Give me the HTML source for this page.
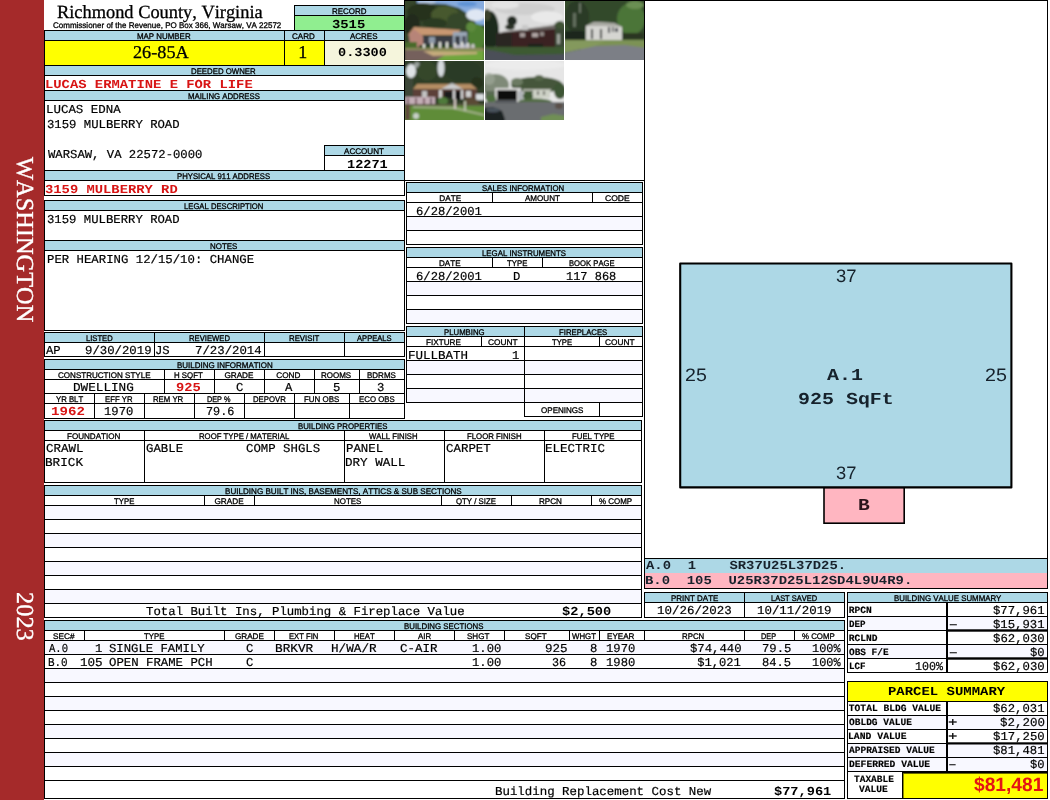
<!DOCTYPE html>
<html lang="en"><head><meta charset="utf-8"><title>Richmond County, Virginia - Property Record Card</title>
<style>
html,body{margin:0;padding:0;background:#fff;}
body{width:1050px;height:800px;overflow:hidden;position:relative;}
#page{position:absolute;left:0;top:0;width:1050px;height:800px;overflow:hidden;background:#fff;}
#gfx,#txt{position:absolute;left:0;top:0;width:1050px;height:800px;}
#txt{will-change:transform;}
.b,.l,.t,.fr{position:absolute;}
.l{background:#000;}
.fr{border:1px solid #000;}
.t{white-space:pre;color:#000;transform-origin:0 0;font-kerning:none;text-rendering:geometricPrecision;font-variant-ligatures:none;}
.lab{-webkit-text-stroke:0.3px;font-family:"Liberation Sans",sans-serif;font-size:8.2px;line-height:10px;}
.c{-webkit-text-stroke:0.2px;font-family:"Liberation Mono",monospace;font-size:12.1px;line-height:14px;}
.cb{font-family:"Liberation Mono",monospace;font-size:12.2px;font-weight:bold;line-height:15px;}
.cs{-webkit-text-stroke:0.15px;font-family:"Liberation Mono",monospace;font-size:9.6px;line-height:11px;font-weight:bold;}
.ser{-webkit-text-stroke:0.3px;font-family:"Liberation Serif",serif;font-size:18.6px;line-height:22px;}
.sans{font-family:"Liberation Sans",sans-serif;font-size:18px;line-height:22px;}
.sansb{font-family:"Liberation Sans",sans-serif;font-size:19.4px;line-height:24px;font-weight:bold;}
.red{color:#d81414;}
.side{font-family:"Liberation Serif",serif;color:#fff;font-size:24.4px;line-height:24px;-webkit-text-stroke:0.35px #fff;transform-origin:0 0;transform:rotate(90deg) translateY(-50%);}

</style></head>
<body>
<div id="page">
<div id="gfx">
<div class="b" style="left:0px;top:0px;width:44px;height:800px;background:#a52a2a;"></div>
<div class="b" style="left:295px;top:6px;width:109px;height:9px;background:#add8e6;"></div>
<div class="b" style="left:295px;top:16px;width:109px;height:14px;background:#90ee90;"></div>
<div class="fr" style="left:294px;top:5px;width:109px;height:24px"></div>
<div class="l" style="left:294px;top:15px;width:111px;height:1px"></div>
<div class="b" style="left:45px;top:31px;width:359px;height:9px;background:#add8e6;"></div>
<div class="b" style="left:45px;top:41px;width:239px;height:24px;background:#ffff00;"></div>
<div class="b" style="left:285px;top:41px;width:39px;height:24px;background:#ffff00;"></div>
<div class="b" style="left:325px;top:41px;width:79px;height:24px;background:#f5f5dc;"></div>
<div class="b" style="left:45px;top:66px;width:359px;height:9px;background:#add8e6;"></div>
<div class="b" style="left:45px;top:91px;width:359px;height:9px;background:#add8e6;"></div>
<div class="b" style="left:45px;top:171px;width:359px;height:9px;background:#add8e6;"></div>
<div class="fr" style="left:44px;top:30px;width:359px;height:164px"></div>
<div class="l" style="left:44px;top:40px;width:361px;height:1px"></div>
<div class="l" style="left:44px;top:65px;width:361px;height:1px"></div>
<div class="l" style="left:44px;top:75px;width:361px;height:1px"></div>
<div class="l" style="left:44px;top:90px;width:361px;height:1px"></div>
<div class="l" style="left:44px;top:100px;width:361px;height:1px"></div>
<div class="l" style="left:44px;top:170px;width:361px;height:1px"></div>
<div class="l" style="left:44px;top:180px;width:361px;height:1px"></div>
<div class="l" style="left:284px;top:30px;width:1px;height:36px"></div>
<div class="l" style="left:324px;top:30px;width:1px;height:36px"></div>
<div class="b" style="left:325px;top:146px;width:79px;height:9px;background:#add8e6;"></div>
<div class="fr" style="left:324px;top:145px;width:79px;height:24px"></div>
<div class="l" style="left:324px;top:155px;width:81px;height:1px"></div>
<div class="b" style="left:45px;top:201px;width:359px;height:9px;background:#add8e6;"></div>
<div class="b" style="left:45px;top:241px;width:359px;height:9px;background:#add8e6;"></div>
<div class="fr" style="left:44px;top:200px;width:359px;height:129px"></div>
<div class="l" style="left:44px;top:210px;width:361px;height:1px"></div>
<div class="l" style="left:44px;top:240px;width:361px;height:1px"></div>
<div class="l" style="left:44px;top:250px;width:361px;height:1px"></div>
<div class="b" style="left:45px;top:333px;width:359px;height:9px;background:#add8e6;"></div>
<div class="fr" style="left:44px;top:332px;width:359px;height:23px"></div>
<div class="l" style="left:44px;top:342px;width:361px;height:1px"></div>
<div class="l" style="left:154px;top:332px;width:1px;height:25px"></div>
<div class="l" style="left:264px;top:332px;width:1px;height:25px"></div>
<div class="l" style="left:344px;top:332px;width:1px;height:25px"></div>
<div class="b" style="left:45px;top:360px;width:359px;height:9px;background:#add8e6;"></div>
<div class="fr" style="left:44px;top:359px;width:359px;height:58px"></div>
<div class="l" style="left:44px;top:369px;width:361px;height:1px"></div>
<div class="l" style="left:44px;top:379px;width:361px;height:1px"></div>
<div class="l" style="left:44px;top:393px;width:361px;height:1px"></div>
<div class="l" style="left:44px;top:403px;width:361px;height:1px"></div>
<div class="l" style="left:164px;top:369px;width:1px;height:25px"></div>
<div class="l" style="left:214px;top:369px;width:1px;height:25px"></div>
<div class="l" style="left:264px;top:369px;width:1px;height:25px"></div>
<div class="l" style="left:314px;top:369px;width:1px;height:25px"></div>
<div class="l" style="left:359px;top:369px;width:1px;height:25px"></div>
<div class="l" style="left:94px;top:393px;width:1px;height:26px"></div>
<div class="l" style="left:144px;top:393px;width:1px;height:26px"></div>
<div class="l" style="left:194px;top:393px;width:1px;height:26px"></div>
<div class="l" style="left:244px;top:393px;width:1px;height:26px"></div>
<div class="l" style="left:294px;top:393px;width:1px;height:26px"></div>
<div class="l" style="left:349px;top:393px;width:1px;height:26px"></div>
<div class="l" style="left:404px;top:0px;width:1px;height:31px"></div>
<div class="l" style="left:404px;top:0px;width:644px;height:1px"></div>
<div class="l" style="left:404px;top:180px;width:241px;height:1px"></div>
<div class="l" style="left:644px;top:0px;width:1px;height:589px"></div>
<div class="l" style="left:1047px;top:0px;width:1px;height:589px"></div>
<svg class="b" style="left:405px;top:1px" width="79" height="59" viewBox="0 0 79 59"><defs><filter id="f1" x="-10%" y="-10%" width="120%" height="120%"><feGaussianBlur stdDeviation="0.9"/></filter><clipPath id="c1"><rect width="79" height="59"/></clipPath></defs><rect width="79" height="59" fill="#888"/><g clip-path="url(#c1)"><g filter="url(#f1)"><rect x="-2" y="-2" width="83" height="63" fill="#35452a"/><polygon points="12,-2 81,-2 81,24 72,24 66,15 54,7 40,3 12,2" fill="#86abdf"/><ellipse cx="71" cy="14" rx="10" ry="6" fill="#dfe7f3"/><ellipse cx="62" cy="3" rx="10" ry="2.5" fill="#5f93d6"/><ellipse cx="22" cy="1" rx="9" ry="1.8" fill="#c9d6e8" opacity="0.8"/><ellipse cx="18" cy="11" rx="16" ry="9" fill="#27331f"/><ellipse cx="40" cy="14" rx="14" ry="9" fill="#46592d"/><ellipse cx="7" cy="24" rx="8" ry="11" fill="#222b1b"/><ellipse cx="52" cy="20" rx="10" ry="8" fill="#34462a"/><ellipse cx="30" cy="22" rx="12" ry="5" fill="#2b3a22"/><ellipse cx="72" cy="36" rx="9" ry="13" fill="#4f8033"/><ellipse cx="66" cy="26" rx="5" ry="5" fill="#5d8a3c"/><polygon points="3,34 9,26 56,29 50,34" fill="#c99772"/><polygon points="4,34 9,28 18,35 18,47 5,45" fill="#b78478"/><rect x="18" y="35" width="30" height="9" fill="#3b3d45"/><rect x="24" y="36" width="6" height="6" fill="#8d99a8"/><rect x="48" y="31" width="14" height="17" fill="#9aa6b5"/><rect x="50" y="35" width="5" height="9" fill="#3a4048"/><rect x="57" y="35" width="4" height="8" fill="#48505a"/><rect x="0" y="41" width="12" height="7" fill="#4a6a2c"/><rect x="14" y="44" width="36" height="5" fill="#2f4a26"/><rect x="18" y="43" width="2" height="8" fill="#e8e8e0"/><rect x="26" y="42" width="2" height="8" fill="#e8e8e0"/><rect x="34" y="41" width="2" height="9" fill="#e8e8e0"/><rect x="41" y="41" width="2" height="9" fill="#e8e8e0"/><rect x="49" y="42" width="2" height="8" fill="#e8e8e0"/><rect x="56" y="41" width="2" height="8" fill="#e8e8e0"/><rect x="62" y="42" width="2" height="8" fill="#e8e8e0"/><rect x="67" y="43" width="2" height="7" fill="#d8d8d0"/><rect x="48" y="44" width="22" height="5" fill="#c9c0cc" opacity="0.6"/><rect x="0" y="47" width="79" height="3" fill="#8a8a5a"/><polygon points="0,50 79,50 79,60 0,60" fill="#6fa63c"/><polygon points="0,49 22,49 40,54 30,60 0,60" fill="#75605c"/><polygon points="18,50 72,51 72,53 28,55" fill="#c6ab7d"/></g></g></svg>
<svg class="b" style="left:485px;top:1px" width="79" height="59" viewBox="0 0 79 59"><defs><filter id="f2" x="-10%" y="-10%" width="120%" height="120%"><feGaussianBlur stdDeviation="0.9"/></filter><clipPath id="c2"><rect width="79" height="59"/></clipPath></defs><rect width="79" height="59" fill="#888"/><g clip-path="url(#c2)"><g filter="url(#f2)"><rect x="-2" y="-2" width="83" height="63" fill="#dcdcdc"/><ellipse cx="40" cy="8" rx="30" ry="6" fill="#cfcfcf"/><ellipse cx="62" cy="16" rx="16" ry="6" fill="#e9e9e9"/><ellipse cx="20" cy="4" rx="14" ry="4" fill="#e4e4e4"/><ellipse cx="5" cy="30" rx="9" ry="20" fill="#1e2a1c"/><ellipse cx="2" cy="14" rx="4" ry="6" fill="#3a3f2c"/><ellipse cx="27" cy="20" rx="5" ry="5" fill="#222c20"/><ellipse cx="25" cy="26" rx="5" ry="3" fill="#2a3326"/><rect x="69" y="23" width="12" height="25" fill="#3a4836"/><ellipse cx="75" cy="24" rx="5" ry="4" fill="#3f5236"/><polygon points="17,31 40,28 70,24 70,29 17,33" fill="#6c6663"/><rect x="37" y="24" width="6" height="5" fill="#c8c8c8"/><polygon points="11,32 70,28 70,47 11,47" fill="#3b2422"/><rect x="11" y="32" width="16" height="15" fill="#2b2624"/><rect x="35" y="32" width="5" height="4" fill="#a49a98"/><rect x="47" y="32" width="6" height="4" fill="#b0a6a4"/><rect x="55" y="31" width="4" height="4" fill="#8f8583"/><rect x="43" y="43" width="15" height="5" fill="#17211c"/><rect x="72" y="33" width="3" height="10" fill="#b9bbb6" opacity="0.8"/><rect x="-2" y="46" width="83" height="8" fill="#3c5a31"/><polygon points="-2,48 10,50 30,54 81,53 81,61 -2,61" fill="#4b5058"/></g></g></svg>
<svg class="b" style="left:565px;top:1px" width="79" height="59" viewBox="0 0 79 59"><defs><filter id="f3" x="-10%" y="-10%" width="120%" height="120%"><feGaussianBlur stdDeviation="0.9"/></filter><clipPath id="c3"><rect width="79" height="59"/></clipPath></defs><rect width="79" height="59" fill="#888"/><g clip-path="url(#c3)"><g filter="url(#f3)"><rect x="-2" y="-2" width="83" height="63" fill="#33492c"/><ellipse cx="12" cy="16" rx="12" ry="16" fill="#2b3a26"/><ellipse cx="38" cy="10" rx="14" ry="12" fill="#324a2c"/><ellipse cx="66" cy="18" rx="14" ry="16" fill="#4c7538"/><ellipse cx="70" cy="4" rx="9" ry="4" fill="#6b8f52"/><rect x="8" y="12" width="3" height="14" fill="#8a9484" opacity="0.6"/><rect x="14" y="2" width="2" height="10" fill="#a6ae9f" opacity="0.5"/><rect x="0" y="30" width="20" height="10" fill="#1f271d"/><rect x="58" y="32" width="21" height="6" fill="#2a3523"/><polygon points="21,25 29,21 49,22 57,26 57,39 21,39" fill="#d5d5d1"/><polygon points="21,25 29,21 49,22 57,26 40,25" fill="#a9a9a3"/><rect x="26" y="28" width="2" height="10" fill="#23262a"/><rect x="35" y="28" width="2" height="10" fill="#23262a"/><rect x="43" y="26" width="2" height="6" fill="#3a3e44"/><rect x="47" y="26" width="1.5" height="5" fill="#3a3e44"/><rect x="50" y="27" width="3" height="4" fill="#4a4e54"/><rect x="-2" y="39" width="83" height="9" fill="#7c9254"/><polygon points="-2,52 30,45 60,44 81,47 81,61 -2,61" fill="#7b7f86"/><polygon points="-2,40 40,40 30,45 -2,52" fill="#84995d"/></g></g></svg>
<svg class="b" style="left:405px;top:61px" width="79" height="59" viewBox="0 0 79 59"><defs><filter id="f4" x="-10%" y="-10%" width="120%" height="120%"><feGaussianBlur stdDeviation="0.9"/></filter><clipPath id="c4"><rect width="79" height="59"/></clipPath></defs><rect width="79" height="59" fill="#888"/><g clip-path="url(#c4)"><g filter="url(#f4)"><rect x="-2" y="-2" width="83" height="63" fill="#2d3d27"/><ellipse cx="6" cy="10" rx="5" ry="7" fill="#dfe3e6"/><ellipse cx="36" cy="7" rx="3.5" ry="9" fill="#d6dade"/><ellipse cx="12" cy="4" rx="3" ry="3" fill="#c8ccd0" opacity="0.7"/><ellipse cx="22" cy="10" rx="10" ry="10" fill="#34472c"/><ellipse cx="58" cy="10" rx="18" ry="10" fill="#2a3a25"/><ellipse cx="72" cy="22" rx="6" ry="6" fill="#25301f"/><rect x="0" y="18" width="8" height="20" fill="#3c4638"/><polygon points="8,28 12,23 66,23 72,28" fill="#b48d63"/><polygon points="36,28 47,22 58,28" fill="#c9cacb"/><rect x="8" y="28" width="64" height="9" fill="#5b4038"/><rect x="17" y="30" width="5" height="6" fill="#c2c2c2"/><rect x="61" y="30" width="5" height="6" fill="#d0d0d0"/><rect x="34" y="29" width="3" height="8" fill="#d8d8d8"/><rect x="48" y="29" width="2" height="9" fill="#dcdcdc"/><rect x="56" y="29" width="2" height="9" fill="#dcdcdc"/><rect x="39" y="30" width="9" height="7" fill="#1b1b1d"/><rect x="50" y="30" width="6" height="9" fill="#121214"/><rect x="71" y="33" width="8" height="6" fill="#d9dde0"/><rect x="0" y="36" width="30" height="7" fill="#c4aeb6"/><rect x="2" y="37" width="2" height="6" fill="#7a5a66"/><rect x="10" y="37" width="2" height="6" fill="#7a5a66"/><rect x="18" y="37" width="2" height="6" fill="#7a5a66"/><rect x="25" y="37" width="2" height="6" fill="#6a5a66"/><ellipse cx="38" cy="40" rx="5" ry="4" fill="#4f7a3a"/><ellipse cx="66" cy="42" rx="8" ry="5" fill="#5a4a35"/><rect x="-2" y="43" width="83" height="3" fill="#5a5a40"/><rect x="-2" y="45" width="83" height="16" fill="#5f8c39"/><polygon points="8,45 50,46 79,53 79,55 48,48 8,47" fill="#9fae84"/><rect x="49" y="38" width="2" height="10" fill="#d0c6c0"/><rect x="59" y="40" width="2" height="10" fill="#b8c0a8"/><rect x="0" y="44" width="5" height="15" fill="#5e4a3a"/><ellipse cx="11" cy="55" rx="3" ry="3" fill="#c8d0c8"/></g></g></svg>
<svg class="b" style="left:485px;top:61px" width="79" height="59" viewBox="0 0 79 59"><defs><filter id="f5" x="-10%" y="-10%" width="120%" height="120%"><feGaussianBlur stdDeviation="0.9"/></filter><clipPath id="c5"><rect width="79" height="59"/></clipPath></defs><rect width="79" height="59" fill="#888"/><g clip-path="url(#c5)"><g filter="url(#f5)"><rect x="-2" y="-2" width="83" height="63" fill="#e6e6e6"/><ellipse cx="40" cy="4" rx="40" ry="5" fill="#ececec"/><ellipse cx="10" cy="24" rx="14" ry="11" fill="#7f8a78"/><ellipse cx="4" cy="18" rx="6" ry="6" fill="#9aa294" opacity="0.8"/><ellipse cx="52" cy="24" rx="26" ry="8" fill="#44563a"/><ellipse cx="54" cy="17" rx="5" ry="3" fill="#55654a"/><ellipse cx="75" cy="30" rx="6" ry="8" fill="#3e5434"/><ellipse cx="32" cy="21" rx="6" ry="4" fill="#6c7a62"/><rect x="0" y="30" width="10" height="8" fill="#5a6a52"/><rect x="10" y="27" width="26" height="13" fill="#d8d8d6"/><rect x="12" y="29" width="20" height="10" fill="#0c0c0e"/><rect x="33" y="30" width="5" height="9" fill="#b0b4b8"/><rect x="38" y="28" width="28" height="2" fill="#aeb2a6"/><rect x="48" y="29" width="17" height="8" fill="#cdd1c6"/><rect x="52" y="30" width="2" height="4" fill="#6a6e66"/><rect x="58" y="30" width="2" height="4" fill="#6a6e66"/><ellipse cx="43" cy="35" rx="5" ry="5" fill="#3f5a34"/><ellipse cx="50" cy="41" rx="17" ry="3.5" fill="#4f6a40"/><ellipse cx="6" cy="38" rx="5" ry="4" fill="#4f7040"/><rect x="-2" y="41" width="83" height="20" fill="#6b6d70"/><rect x="10" y="39" width="22" height="3" fill="#55585c"/><polygon points="-2,47 8,46 17,50 20,58 20,61 -2,61" fill="#1c2024"/><ellipse cx="8" cy="49" rx="7" ry="2.5" fill="#4a525c"/><polygon points="56,56 68,53 81,55 81,61 56,61" fill="#6f8f55"/><ellipse cx="74" cy="45" rx="4" ry="3" fill="#5a5048"/></g></g></svg>
<div class="b" style="left:407px;top:183px;width:235px;height:9px;background:#add8e6;"></div>
<div class="b" style="left:407px;top:217px;width:235px;height:13px;background:#f8f8ff;"></div>
<div class="fr" style="left:406px;top:182px;width:235px;height:61px"></div>
<div class="l" style="left:406px;top:192px;width:237px;height:1px"></div>
<div class="l" style="left:406px;top:202px;width:237px;height:1px"></div>
<div class="l" style="left:406px;top:216px;width:237px;height:1px"></div>
<div class="l" style="left:406px;top:230px;width:237px;height:1px"></div>
<div class="l" style="left:492px;top:192px;width:1px;height:11px"></div>
<div class="l" style="left:592px;top:192px;width:1px;height:11px"></div>
<div class="b" style="left:407px;top:248px;width:235px;height:9px;background:#add8e6;"></div>
<div class="b" style="left:407px;top:282px;width:235px;height:13px;background:#f8f8ff;"></div>
<div class="b" style="left:407px;top:310px;width:235px;height:13px;background:#f8f8ff;"></div>
<div class="fr" style="left:406px;top:247px;width:235px;height:75px"></div>
<div class="l" style="left:406px;top:257px;width:237px;height:1px"></div>
<div class="l" style="left:406px;top:267px;width:237px;height:1px"></div>
<div class="l" style="left:406px;top:281px;width:237px;height:1px"></div>
<div class="l" style="left:406px;top:295px;width:237px;height:1px"></div>
<div class="l" style="left:406px;top:309px;width:237px;height:1px"></div>
<div class="l" style="left:492px;top:257px;width:1px;height:11px"></div>
<div class="l" style="left:542px;top:257px;width:1px;height:11px"></div>
<div class="b" style="left:407px;top:327px;width:235px;height:9px;background:#add8e6;"></div>
<div class="b" style="left:407px;top:361px;width:235px;height:13px;background:#f8f8ff;"></div>
<div class="b" style="left:407px;top:389px;width:235px;height:13px;background:#f8f8ff;"></div>
<div class="fr" style="left:406px;top:326px;width:235px;height:75px"></div>
<div class="l" style="left:406px;top:336px;width:237px;height:1px"></div>
<div class="l" style="left:406px;top:346px;width:237px;height:1px"></div>
<div class="l" style="left:406px;top:360px;width:237px;height:1px"></div>
<div class="l" style="left:406px;top:374px;width:237px;height:1px"></div>
<div class="l" style="left:406px;top:388px;width:237px;height:1px"></div>
<div class="l" style="left:524px;top:326px;width:1px;height:91px"></div>
<div class="l" style="left:481px;top:336px;width:1px;height:11px"></div>
<div class="l" style="left:599px;top:336px;width:1px;height:11px"></div>
<div class="l" style="left:524px;top:416px;width:119px;height:1px"></div>
<div class="l" style="left:642px;top:402px;width:1px;height:15px"></div>
<div class="l" style="left:599px;top:402px;width:1px;height:15px"></div>
<div class="b" style="left:45px;top:421px;width:596px;height:9px;background:#add8e6;"></div>
<div class="fr" style="left:44px;top:420px;width:596px;height:61px"></div>
<div class="l" style="left:44px;top:430px;width:598px;height:1px"></div>
<div class="l" style="left:44px;top:440px;width:598px;height:1px"></div>
<div class="l" style="left:144px;top:430px;width:1px;height:53px"></div>
<div class="l" style="left:344px;top:430px;width:1px;height:53px"></div>
<div class="l" style="left:444px;top:430px;width:1px;height:53px"></div>
<div class="l" style="left:544px;top:430px;width:1px;height:53px"></div>
<div class="b" style="left:45px;top:486px;width:596px;height:9px;background:#add8e6;"></div>
<div class="b" style="left:45px;top:506px;width:596px;height:13px;background:#f8f8ff;"></div>
<div class="b" style="left:45px;top:534px;width:596px;height:13px;background:#f8f8ff;"></div>
<div class="b" style="left:45px;top:562px;width:596px;height:13px;background:#f8f8ff;"></div>
<div class="b" style="left:45px;top:590px;width:596px;height:13px;background:#f8f8ff;"></div>
<div class="fr" style="left:44px;top:485px;width:596px;height:131px"></div>
<div class="l" style="left:44px;top:495px;width:598px;height:1px"></div>
<div class="l" style="left:44px;top:505px;width:598px;height:1px"></div>
<div class="l" style="left:44px;top:519px;width:598px;height:1px"></div>
<div class="l" style="left:44px;top:533px;width:598px;height:1px"></div>
<div class="l" style="left:44px;top:547px;width:598px;height:1px"></div>
<div class="l" style="left:44px;top:561px;width:598px;height:1px"></div>
<div class="l" style="left:44px;top:575px;width:598px;height:1px"></div>
<div class="l" style="left:44px;top:589px;width:598px;height:1px"></div>
<div class="l" style="left:44px;top:603px;width:598px;height:1px"></div>
<div class="l" style="left:204px;top:495px;width:1px;height:11px"></div>
<div class="l" style="left:254px;top:495px;width:1px;height:11px"></div>
<div class="l" style="left:441px;top:495px;width:1px;height:11px"></div>
<div class="l" style="left:511px;top:495px;width:1px;height:11px"></div>
<div class="l" style="left:591px;top:495px;width:1px;height:11px"></div>
<div class="b" style="left:45px;top:621px;width:799px;height:9px;background:#add8e6;"></div>
<div class="b" style="left:45px;top:641px;width:799px;height:13px;background:#f8f8ff;"></div>
<div class="b" style="left:45px;top:669px;width:799px;height:13px;background:#f8f8ff;"></div>
<div class="b" style="left:45px;top:697px;width:799px;height:13px;background:#f8f8ff;"></div>
<div class="b" style="left:45px;top:725px;width:799px;height:13px;background:#f8f8ff;"></div>
<div class="b" style="left:45px;top:753px;width:799px;height:13px;background:#f8f8ff;"></div>
<div class="fr" style="left:44px;top:620px;width:799px;height:177px"></div>
<div class="l" style="left:44px;top:630px;width:801px;height:1px"></div>
<div class="l" style="left:44px;top:640px;width:801px;height:1px"></div>
<div class="l" style="left:44px;top:654px;width:801px;height:1px"></div>
<div class="l" style="left:44px;top:668px;width:801px;height:1px"></div>
<div class="l" style="left:44px;top:682px;width:801px;height:1px"></div>
<div class="l" style="left:44px;top:696px;width:801px;height:1px"></div>
<div class="l" style="left:44px;top:710px;width:801px;height:1px"></div>
<div class="l" style="left:44px;top:724px;width:801px;height:1px"></div>
<div class="l" style="left:44px;top:738px;width:801px;height:1px"></div>
<div class="l" style="left:44px;top:752px;width:801px;height:1px"></div>
<div class="l" style="left:44px;top:766px;width:801px;height:1px"></div>
<div class="l" style="left:44px;top:780px;width:801px;height:1px"></div>
<div class="l" style="left:84px;top:630px;width:1px;height:11px"></div>
<div class="l" style="left:224px;top:630px;width:1px;height:11px"></div>
<div class="l" style="left:274px;top:630px;width:1px;height:11px"></div>
<div class="l" style="left:334px;top:630px;width:1px;height:11px"></div>
<div class="l" style="left:394px;top:630px;width:1px;height:11px"></div>
<div class="l" style="left:454px;top:630px;width:1px;height:11px"></div>
<div class="l" style="left:504px;top:630px;width:1px;height:11px"></div>
<div class="l" style="left:569px;top:630px;width:1px;height:11px"></div>
<div class="l" style="left:599px;top:630px;width:1px;height:11px"></div>
<div class="l" style="left:644px;top:630px;width:1px;height:11px"></div>
<div class="l" style="left:744px;top:630px;width:1px;height:11px"></div>
<div class="l" style="left:794px;top:630px;width:1px;height:11px"></div>
<div class="b" style="left:645px;top:559px;width:402px;height:14px;background:#add8e6;"></div>
<div class="b" style="left:645px;top:573px;width:402px;height:15px;background:#ffb6c1;"></div>
<div class="l" style="left:644px;top:558px;width:404px;height:1px"></div>
<div class="l" style="left:644px;top:588px;width:404px;height:1px"></div>
<svg class="b" style="left:670px;top:255px" width="350" height="275" viewBox="670 255 350 275"><rect x="824" y="487.4" width="80.2" height="35.8" fill="#ffb6c1" stroke="#000" stroke-width="1.6"/><rect x="680.2" y="263.5" width="331.2" height="223.9" fill="#add8e6" stroke="#000" stroke-width="2.1" stroke-linejoin="round"/></svg>
<div class="b" style="left:645px;top:593px;width:199px;height:9px;background:#add8e6;"></div>
<div class="fr" style="left:644px;top:592px;width:199px;height:24px"></div>
<div class="l" style="left:644px;top:602px;width:201px;height:1px"></div>
<div class="l" style="left:744px;top:592px;width:1px;height:26px"></div>
<div class="b" style="left:848px;top:593px;width:199px;height:9px;background:#add8e6;"></div>
<div class="b" style="left:848px;top:617px;width:199px;height:13px;background:#f8f8ff;"></div>
<div class="b" style="left:848px;top:645px;width:199px;height:13px;background:#f8f8ff;"></div>
<div class="fr" style="left:847px;top:592px;width:199px;height:79px"></div>
<div class="l" style="left:847px;top:602px;width:201px;height:1px"></div>
<div class="l" style="left:847px;top:616px;width:201px;height:1px"></div>
<div class="l" style="left:847px;top:630px;width:201px;height:1px"></div>
<div class="l" style="left:847px;top:644px;width:201px;height:1px"></div>
<div class="l" style="left:847px;top:658px;width:201px;height:1px"></div>
<div class="l" style="left:946px;top:602px;width:2px;height:71px"></div>
<div class="l" style="left:946px;top:629px;width:102px;height:1px;background:rgba(0,0,0,0.7)"></div>
<div class="l" style="left:946px;top:630px;width:102px;height:1px"></div>
<div class="l" style="left:946px;top:631px;width:102px;height:1px;background:rgba(0,0,0,0.7)"></div>
<div class="l" style="left:946px;top:657px;width:102px;height:1px;background:rgba(0,0,0,0.7)"></div>
<div class="l" style="left:946px;top:658px;width:102px;height:1px"></div>
<div class="l" style="left:946px;top:659px;width:102px;height:1px;background:rgba(0,0,0,0.7)"></div>
<div class="b" style="left:848px;top:682px;width:199px;height:19px;background:#ffff00;"></div>
<div class="b" style="left:848px;top:716px;width:199px;height:13px;background:#f8f8ff;"></div>
<div class="b" style="left:848px;top:744px;width:199px;height:13px;background:#f8f8ff;"></div>
<div class="b" style="left:848px;top:758px;width:199px;height:13px;background:#f8f8ff;"></div>
<div class="b" style="left:903px;top:772px;width:144px;height:26px;background:#ffff00;"></div>
<div class="fr" style="left:847px;top:681px;width:199px;height:116px"></div>
<div class="l" style="left:847px;top:701px;width:201px;height:1px"></div>
<div class="l" style="left:847px;top:715px;width:201px;height:1px"></div>
<div class="l" style="left:847px;top:729px;width:201px;height:1px"></div>
<div class="l" style="left:847px;top:743px;width:201px;height:1px"></div>
<div class="l" style="left:847px;top:757px;width:201px;height:1px"></div>
<div class="l" style="left:847px;top:771px;width:201px;height:1px"></div>
<div class="l" style="left:946px;top:701px;width:2px;height:71px"></div>
<div class="l" style="left:902px;top:771px;width:1px;height:28px"></div>
<div class="l" style="left:946px;top:742px;width:102px;height:1px;background:rgba(0,0,0,0.7)"></div>
<div class="l" style="left:946px;top:743px;width:102px;height:1px"></div>
<div class="l" style="left:946px;top:744px;width:102px;height:1px;background:rgba(0,0,0,0.5)"></div>
<div class="l" style="left:902px;top:771px;width:146px;height:1px"></div>
<div class="l" style="left:902px;top:772px;width:146px;height:1px"></div>
<div class="l" style="left:902px;top:773px;width:146px;height:1px;background:rgba(0,0,0,0.6)"></div>
<div class="l" style="left:903px;top:774px;width:1px;height:24px;background:rgba(0,0,0,0.45)"></div>
</div>
<div id="txt">
<div class="t side" style="left:23.7px;top:157px;">WASHINGTON</div>
<div class="t side" style="left:23.7px;top:592.4px;">2023</div>
<div class="t ser" style="left:56.6px;top:2px;transform:scaleX(0.988);">Richmond County, Virginia</div>
<div class="t lab" style="left:52.69px;top:21px;transform:scaleX(0.978);">Commissioner of the Revenue, PO Box 366, Warsaw, VA 22572</div>
<div class="t lab" style="left:332.11px;top:7px;transform:scaleX(0.971);">RECORD</div>
<div class="t cb" style="left:331.93px;top:18px;transform:scaleX(1.136);">3515</div>
<div class="t lab" style="left:137.12px;top:32px;transform:scaleX(0.966);">MAP NUMBER</div>
<div class="t lab" style="left:291.68px;top:32px;transform:scaleX(0.979);">CARD</div>
<div class="t lab" style="left:350px;top:32px;transform:scaleX(0.976);">ACRES</div>
<div class="t ser" style="left:132.65px;top:41px;font-size:18px;transform:scaleX(1.012);">26-85A</div>
<div class="t ser" style="left:298.17px;top:41px;font-size:18px;">1</div>
<div class="t cb" style="left:338px;top:46px;transform:scaleX(1.115);">0.3300</div>
<div class="t lab" style="left:191.4px;top:67px;transform:scaleX(0.955);">DEEDED OWNER</div>
<div class="t cb red" style="left:44.61px;top:78px;transform:scaleX(1.136);">LUCAS ERMATINE E FOR LIFE</div>
<div class="t lab" style="left:188.12px;top:92px;transform:scaleX(0.953);">MAILING ADDRESS</div>
<div class="t c" style="left:46.32px;top:103px;transform:scaleX(1.029);">LUCAS EDNA</div>
<div class="t c" style="left:47.01px;top:118px;transform:scaleX(1.015);">3159 MULBERRY ROAD</div>
<div class="t c" style="left:47.85px;top:148px;transform:scaleX(1.013);">WARSAW, VA 22572-0000</div>
<div class="t lab" style="left:344.1px;top:147px;transform:scaleX(0.986);">ACCOUNT</div>
<div class="t cb" style="left:346.72px;top:158px;transform:scaleX(1.115);">12271</div>
<div class="t lab" style="left:177.28px;top:172px;transform:scaleX(0.947);">PHYSICAL 911 ADDRESS</div>
<div class="t cb red" style="left:44.63px;top:183px;transform:scaleX(1.134);">3159 MULBERRY RD</div>
<div class="t lab" style="left:184.28px;top:202px;transform:scaleX(0.938);">LEGAL DESCRIPTION</div>
<div class="t c" style="left:47.01px;top:213px;transform:scaleX(1.015);">3159 MULBERRY ROAD</div>
<div class="t lab" style="left:210.16px;top:242px;transform:scaleX(0.969);">NOTES</div>
<div class="t c" style="left:46.68px;top:253px;transform:scaleX(1.019);">PER HEARING 12/15/10: CHANGE</div>
<div class="t lab" style="left:85.89px;top:334px;transform:scaleX(0.931);">LISTED</div>
<div class="t lab" style="left:188.99px;top:334px;transform:scaleX(0.937);">REVIEWED</div>
<div class="t lab" style="left:288.98px;top:334px;transform:scaleX(0.953);">REVISIT</div>
<div class="t lab" style="left:356.8px;top:334px;transform:scaleX(0.929);">APPEALS</div>
<div class="t c" style="left:46.25px;top:344px;transform:scaleX(1.012);">AP</div>
<div class="t c" style="left:84.8px;top:344px;transform:scaleX(1.019);">9/30/2019</div>
<div class="t c" style="left:155.37px;top:344px;transform:scaleX(1.012);">JS</div>
<div class="t c" style="left:195.07px;top:344px;transform:scaleX(1.021);">7/23/2014</div>
<div class="t lab" style="left:176.89px;top:361px;transform:scaleX(0.975);">BUILDING INFORMATION</div>
<div class="t lab" style="left:58.12px;top:371px;transform:scaleX(0.983);">CONSTRUCTION STYLE</div>
<div class="t lab" style="left:174.17px;top:371px;transform:scaleX(0.958);">H SQFT</div>
<div class="t lab" style="left:224.39px;top:371px;">GRADE</div>
<div class="t lab" style="left:276.24px;top:371px;">COND</div>
<div class="t lab" style="left:321.18px;top:371px;transform:scaleX(0.976);">ROOMS</div>
<div class="t lab" style="left:367.13px;top:371px;transform:scaleX(0.977);">BDRMS</div>
<div class="t c" style="left:73.05px;top:381px;transform:scaleX(1.047);">DWELLING</div>
<div class="t cb red" style="left:176.18px;top:381px;transform:scaleX(1.128);">925</div>
<div class="t c" style="left:235.63px;top:381px;transform:scaleX(1.012);">C</div>
<div class="t c" style="left:285.33px;top:381px;transform:scaleX(1.012);">A</div>
<div class="t c" style="left:332.73px;top:381px;transform:scaleX(1.012);">5</div>
<div class="t c" style="left:377.39px;top:381px;transform:scaleX(1.012);">3</div>
<div class="t lab" style="left:56.09px;top:395px;transform:scaleX(0.946);">YR BLT</div>
<div class="t lab" style="left:105.28px;top:395px;transform:scaleX(0.945);">EFF YR</div>
<div class="t lab" style="left:153.25px;top:395px;transform:scaleX(0.948);">REM YR</div>
<div class="t lab" style="left:207.37px;top:395px;transform:scaleX(0.890);">DEP %</div>
<div class="t lab" style="left:253.25px;top:395px;transform:scaleX(0.949);">DEPOVR</div>
<div class="t lab" style="left:304.16px;top:395px;transform:scaleX(0.970);">FUN OBS</div>
<div class="t lab" style="left:358.97px;top:395px;transform:scaleX(0.957);">ECO OBS</div>
<div class="t cb red" style="left:51.39px;top:405px;transform:scaleX(1.159);">1962</div>
<div class="t c" style="left:103.89px;top:405px;transform:scaleX(1.010);">1970</div>
<div class="t c" style="left:206.31px;top:405px;transform:scaleX(0.978);">79.6</div>
<div class="t lab" style="left:481.89px;top:184px;transform:scaleX(0.956);">SALES INFORMATION</div>
<div class="t lab" style="left:439.32px;top:194px;">DATE</div>
<div class="t lab" style="left:525.2px;top:194px;transform:scaleX(0.984);">AMOUNT</div>
<div class="t lab" style="left:605.27px;top:194px;transform:scaleX(1.046);">CODE</div>
<div class="t c" style="left:415.75px;top:205px;transform:scaleX(1.008);">6/28/2001</div>
<div class="t lab" style="left:482.17px;top:249px;transform:scaleX(0.957);">LEGAL INSTRUMENTS</div>
<div class="t lab" style="left:438.98px;top:259px;transform:scaleX(0.990);">DATE</div>
<div class="t lab" style="left:507.24px;top:259px;transform:scaleX(0.952);">TYPE</div>
<div class="t lab" style="left:569.45px;top:259px;transform:scaleX(0.937);">BOOK PAGE</div>
<div class="t c" style="left:415.75px;top:270px;transform:scaleX(1.008);">6/28/2001</div>
<div class="t c" style="left:512.97px;top:270px;transform:scaleX(1.012);">D</div>
<div class="t c" style="left:565.96px;top:270px;transform:scaleX(0.990);">117 868</div>
<div class="t lab" style="left:444.08px;top:328px;transform:scaleX(0.950);">PLUMBING</div>
<div class="t lab" style="left:559.18px;top:328px;transform:scaleX(0.947);">FIREPLACES</div>
<div class="t lab" style="left:426.22px;top:338px;transform:scaleX(0.994);">FIXTURE</div>
<div class="t lab" style="left:487.58px;top:338px;transform:scaleX(1.018);">COUNT</div>
<div class="t lab" style="left:552.11px;top:338px;transform:scaleX(0.942);">TYPE</div>
<div class="t lab" style="left:605.28px;top:338px;transform:scaleX(1.015);">COUNT</div>
<div class="t c" style="left:408.02px;top:349px;transform:scaleX(1.033);">FULLBATH</div>
<div class="t c" style="left:511.77px;top:349px;transform:scaleX(1.012);">1</div>
<div class="t lab" style="left:540.81px;top:406px;transform:scaleX(0.983);">OPENINGS</div>
<div class="t lab" style="left:297.97px;top:422px;transform:scaleX(0.955);">BUILDING PROPERTIES</div>
<div class="t lab" style="left:66.85px;top:432px;transform:scaleX(0.985);">FOUNDATION</div>
<div class="t lab" style="left:199.04px;top:432px;transform:scaleX(0.949);">ROOF TYPE / MATERIAL</div>
<div class="t lab" style="left:369.39px;top:432px;transform:scaleX(0.944);">WALL FINISH</div>
<div class="t lab" style="left:467.17px;top:432px;transform:scaleX(0.953);">FLOOR FINISH</div>
<div class="t lab" style="left:572.17px;top:432px;transform:scaleX(0.953);">FUEL TYPE</div>
<div class="t c" style="left:45.71px;top:442px;transform:scaleX(1.031);">CRAWL</div>
<div class="t c" style="left:45.46px;top:456px;transform:scaleX(1.047);">BRICK</div>
<div class="t c" style="left:145.82px;top:442px;transform:scaleX(1.022);">GABLE</div>
<div class="t c" style="left:246.02px;top:442px;transform:scaleX(1.022);">COMP SHGLS</div>
<div class="t c" style="left:345.97px;top:442px;transform:scaleX(1.024);">PANEL</div>
<div class="t c" style="left:345.16px;top:456px;transform:scaleX(1.040);">DRY WALL</div>
<div class="t c" style="left:445.82px;top:442px;transform:scaleX(1.029);">CARPET</div>
<div class="t c" style="left:544.86px;top:442px;transform:scaleX(1.032);">ELECTRIC</div>
<div class="t lab" style="left:225.17px;top:487px;transform:scaleX(0.987);">BUILDING BUILT INS, BASEMENTS, ATTICS &amp; SUB SECTIONS</div>
<div class="t lab" style="left:114.11px;top:497px;transform:scaleX(0.951);">TYPE</div>
<div class="t lab" style="left:214.49px;top:497px;">GRADE</div>
<div class="t lab" style="left:333.96px;top:497px;transform:scaleX(0.969);">NOTES</div>
<div class="t lab" style="left:455.55px;top:497px;transform:scaleX(0.956);">QTY / SIZE</div>
<div class="t lab" style="left:539.05px;top:497px;transform:scaleX(0.989);">RPCN</div>
<div class="t lab" style="left:598.82px;top:497px;transform:scaleX(0.971);">% COMP</div>
<div class="t c" style="left:146.07px;top:605px;transform:scaleX(1.021);">Total Built Ins, Plumbing &amp; Fireplace Value</div>
<div class="t cb" style="left:562.43px;top:605px;transform:scaleX(1.123);">$2,500</div>
<div class="t lab" style="left:404.17px;top:622px;transform:scaleX(0.959);">BUILDING SECTIONS</div>
<div class="t lab" style="left:52.97px;top:632px;transform:scaleX(1.008);">SEC#</div>
<div class="t lab" style="left:143.8px;top:632px;transform:scaleX(0.953);">TYPE</div>
<div class="t lab" style="left:234.59px;top:632px;transform:scaleX(0.993);">GRADE</div>
<div class="t lab" style="left:289.29px;top:632px;transform:scaleX(0.935);">EXT FIN</div>
<div class="t lab" style="left:354.18px;top:632px;transform:scaleX(0.950);">HEAT</div>
<div class="t lab" style="left:418.01px;top:632px;transform:scaleX(0.963);">AIR</div>
<div class="t lab" style="left:467.09px;top:632px;transform:scaleX(0.984);">SHGT</div>
<div class="t lab" style="left:525.43px;top:632px;transform:scaleX(0.989);">SQFT</div>
<div class="t lab" style="left:571.9px;top:632px;transform:scaleX(0.957);">WHGT</div>
<div class="t lab" style="left:606.99px;top:632px;transform:scaleX(0.987);">EYEAR</div>
<div class="t lab" style="left:682.22px;top:632px;transform:scaleX(0.958);">RPCN</div>
<div class="t lab" style="left:761.37px;top:632px;transform:scaleX(0.893);">DEP</div>
<div class="t lab" style="left:802.12px;top:632px;transform:scaleX(0.959);">% COMP</div>
<div class="t c" style="left:49.2px;top:642px;transform:scaleX(0.874);">A.0</div>
<div class="t c" style="left:94.57px;top:642px;transform:scaleX(1.012);">1</div>
<div class="t c" style="left:108.98px;top:642px;transform:scaleX(1.014);">SINGLE FAMILY</div>
<div class="t c" style="left:245.83px;top:642px;transform:scaleX(1.012);">C</div>
<div class="t c" style="left:275.45px;top:642px;transform:scaleX(1.051);">BRKVR</div>
<div class="t c" style="left:330.78px;top:642px;transform:scaleX(1.047);">H/WA/R</div>
<div class="t c" style="left:400.01px;top:642px;transform:scaleX(1.033);">C-AIR</div>
<div class="t c" style="left:471.85px;top:642px;transform:scaleX(1.008);">1.00</div>
<div class="t c" style="left:544.89px;top:642px;transform:scaleX(1.036);">925</div>
<div class="t c" style="left:589.86px;top:642px;transform:scaleX(1.012);">8</div>
<div class="t c" style="left:605.85px;top:642px;transform:scaleX(1.008);">1970</div>
<div class="t c" style="left:690.23px;top:642px;transform:scaleX(1.015);">$74,440</div>
<div class="t c" style="left:761.88px;top:642px;transform:scaleX(1.011);">79.5</div>
<div class="t c" style="left:811.97px;top:642px;transform:scaleX(0.984);">100%</div>
<div class="t c" style="left:48.32px;top:656px;transform:scaleX(0.904);">B.0</div>
<div class="t c" style="left:79.83px;top:656px;transform:scaleX(1.041);">105</div>
<div class="t c" style="left:109.34px;top:656px;transform:scaleX(1.020);">OPEN FRAME PCH</div>
<div class="t c" style="left:245.83px;top:656px;transform:scaleX(1.012);">C</div>
<div class="t c" style="left:471.85px;top:656px;transform:scaleX(1.008);">1.00</div>
<div class="t c" style="left:552.09px;top:656px;transform:scaleX(0.972);">36</div>
<div class="t c" style="left:589.86px;top:656px;transform:scaleX(1.012);">8</div>
<div class="t c" style="left:605.85px;top:656px;transform:scaleX(1.008);">1980</div>
<div class="t c" style="left:697.14px;top:656px;">$1,021</div>
<div class="t c" style="left:762.07px;top:656px;">84.5</div>
<div class="t c" style="left:811.97px;top:656px;transform:scaleX(0.984);">100%</div>
<div class="t c" style="left:494.57px;top:785px;transform:scaleX(1.027);">Building Replacement Cost New</div>
<div class="t cb" style="left:774.19px;top:785px;transform:scaleX(1.119);">$77,961</div>
<div class="t cb" style="left:645.78px;top:559px;transform:scaleX(1.140);color:#18222c;">A.0  1    SR37U25L37D25.</div>
<div class="t cb" style="left:645.3px;top:574px;transform:scaleX(1.142);color:#18222c;">B.0  105  U25R37D25L12SD4L9U4R9.</div>
<div class="t sans" style="left:836.06px;top:265px;transform:scaleX(1.024);color:#16222c;">37</div>
<div class="t sans" style="left:836.06px;top:462px;transform:scaleX(1.018);color:#16222c;">37</div>
<div class="t sans" style="left:684.62px;top:364px;transform:scaleX(1.088);color:#16222c;">25</div>
<div class="t sans" style="left:984.82px;top:364px;transform:scaleX(1.094);color:#16222c;">25</div>
<div class="t cb" style="left:827.2px;top:369px;font-size:16.7px;transform:scaleX(1.194);color:#16222c;">A.1</div>
<div class="t cb" style="left:797.9px;top:393px;font-size:16.7px;transform:scaleX(1.196);color:#16222c;">925 SqFt</div>
<div class="t cb" style="left:857.67px;top:499px;font-size:16.7px;transform:scaleX(1.175);color:#2a141a;">B</div>
<div class="t lab" style="left:671.06px;top:594px;transform:scaleX(0.972);">PRINT DATE</div>
<div class="t lab" style="left:771.3px;top:594px;transform:scaleX(0.912);">LAST SAVED</div>
<div class="t c" style="left:656.71px;top:604px;transform:scaleX(1.030);">10/26/2023</div>
<div class="t c" style="left:756.53px;top:604px;transform:scaleX(1.027);">10/11/2019</div>
<div class="t lab" style="left:894.25px;top:594px;transform:scaleX(0.959);">BUILDING VALUE SUMMARY</div>
<div class="t cs" style="left:848.78px;top:605px;">RPCN</div>
<div class="t cs" style="left:848.8px;top:619px;transform:scaleX(0.959);">DEP</div>
<div class="t cs" style="left:848.78px;top:633px;">RCLND</div>
<div class="t cs" style="left:849.07px;top:647px;transform:scaleX(0.982);">OBS F/E</div>
<div class="t cs" style="left:849.03px;top:661px;transform:scaleX(0.959);">LCF</div>
<div class="t c" style="left:992.68px;top:604px;transform:scaleX(1.016);">$77,961</div>
<div class="t c" style="left:992.68px;top:618px;transform:scaleX(1.016);">$15,931</div>
<div class="t c" style="left:992.66px;top:632px;transform:scaleX(1.019);">$62,030</div>
<div class="t c" style="left:1029.78px;top:646px;transform:scaleX(1.010);">$0</div>
<div class="t c" style="left:992.66px;top:660px;transform:scaleX(1.019);">$62,030</div>
<div class="t c" style="left:945.71px;top:618px;transform:scaleX(2.007);">-</div>
<div class="t c" style="left:945.71px;top:646px;transform:scaleX(2.007);">-</div>
<div class="t c" style="left:914.98px;top:660px;transform:scaleX(0.966);">100%</div>
<div class="t cb" style="left:888.1px;top:685px;transform:scaleX(1.144);">PARCEL SUMMARY</div>
<div class="t cs" style="left:848.86px;top:703px;">TOTAL BLDG VALUE</div>
<div class="t cs" style="left:848.77px;top:717px;transform:scaleX(0.993);">OBLDG VALUE</div>
<div class="t cs" style="left:848.12px;top:731px;transform:scaleX(1.017);">LAND VALUE</div>
<div class="t cs" style="left:849.1px;top:745px;transform:scaleX(0.993);">APPRAISED VALUE</div>
<div class="t cs" style="left:849.03px;top:759px;transform:scaleX(1.007);">DEFERRED VALUE</div>
<div class="t c" style="left:993.13px;top:702px;transform:scaleX(1.014);">$62,031</div>
<div class="t c" style="left:999.65px;top:716px;transform:scaleX(1.030);">$2,200</div>
<div class="t c" style="left:993.13px;top:730px;transform:scaleX(1.017);">$17,250</div>
<div class="t c" style="left:993.13px;top:744px;transform:scaleX(1.014);">$81,481</div>
<div class="t c" style="left:1030.23px;top:758px;transform:scaleX(1.005);">$0</div>
<div class="t c" style="left:947.88px;top:716px;transform:scaleX(1.300);">+</div>
<div class="t c" style="left:947.88px;top:730px;transform:scaleX(1.300);">+</div>
<div class="t c" style="left:946.15px;top:758px;transform:scaleX(1.771);">-</div>
<div class="t cs" style="left:853.76px;top:774px;transform:scaleX(0.990);">TAXABLE</div>
<div class="t cs" style="left:859px;top:784px;">VALUE</div>
<div class="t sansb" style="left:973.72px;top:773px;transform:scaleX(0.990);color:#e41414;">$81,481</div>
</div>
</div>
</body></html>
